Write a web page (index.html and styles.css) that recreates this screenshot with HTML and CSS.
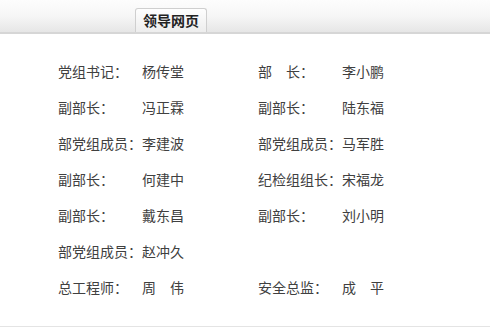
FILE: index.html
```html
<!DOCTYPE html>
<html lang="zh-CN">
<head>
<meta charset="utf-8">
<link rel="stylesheet" href="styles.css">
</head>
<body>
<div class="panel">
  <div class="header">
    <div class="tab">领导网页</div>
  </div>
  <div class="list">
    <div class="item"><span class="label">党组书记：</span><span class="name">杨传堂</span></div>
    <div class="item"><span class="label">部　长：</span><span class="name">李小鹏</span></div>
    <div class="item"><span class="label">副部长：</span><span class="name">冯正霖</span></div>
    <div class="item"><span class="label">副部长：</span><span class="name">陆东福</span></div>
    <div class="item"><span class="label">部党组成员：</span><span class="name">李建波</span></div>
    <div class="item"><span class="label">部党组成员：</span><span class="name">马军胜</span></div>
    <div class="item"><span class="label">副部长：</span><span class="name">何建中</span></div>
    <div class="item"><span class="label">纪检组组长：</span><span class="name">宋福龙</span></div>
    <div class="item"><span class="label">副部长：</span><span class="name">戴东昌</span></div>
    <div class="item"><span class="label">副部长：</span><span class="name">刘小明</span></div>
    <div class="item"><span class="label">部党组成员：</span><span class="name">赵冲久</span></div>
    <div class="item"></div>
    <div class="item"><span class="label">总工程师：</span><span class="name">周　伟</span></div>
    <div class="item"><span class="label">安全总监：</span><span class="name">成　平</span></div>
  </div>
  <div class="footer"></div>
</div>
</body>
</html>
```

FILE: styles.css
```css
html, body {
  margin: 0;
  padding: 0;
  background: #fff;
}
body {
  font-family: "Noto Sans CJK SC", "Noto Sans", sans-serif;
  color: #404040;
  width: 490px;
  height: 334px;
  overflow: hidden;
}
.header {
  height: 32px;
  background: linear-gradient(to bottom, #fdfdfd 0%, #f6f6f6 50%, #e6e6e6 100%);
  border-bottom: 2px solid #d6d6d6;
  display: flex;
  align-items: flex-end;
  padding-left: 135px;
}
.tab {
  height: 24px;
  width: 72px;
  box-sizing: border-box;
  border: 1px solid #cfcfcf;
  border-bottom: none;
  border-radius: 3px 3px 0 0;
  background: linear-gradient(to bottom, #fefefe, #ededed);
  font-size: 14px;
  font-weight: bold;
  color: #222;
  text-align: center;
  line-height: 23px;
}
.list {
  display: grid;
  grid-template-columns: 200px 200px;
  grid-auto-rows: 36px;
  padding: 19px 0 0 58px;
  height: 252px;
}
.item {
  display: flex;
  align-items: center;
  font-size: 14px;
  white-space: nowrap;
}
.label {
  display: inline-block;
  width: 84px;
}
.footer {
  border-top: 1px solid #e4e4e4;
  margin-top: 21px;
}
```
